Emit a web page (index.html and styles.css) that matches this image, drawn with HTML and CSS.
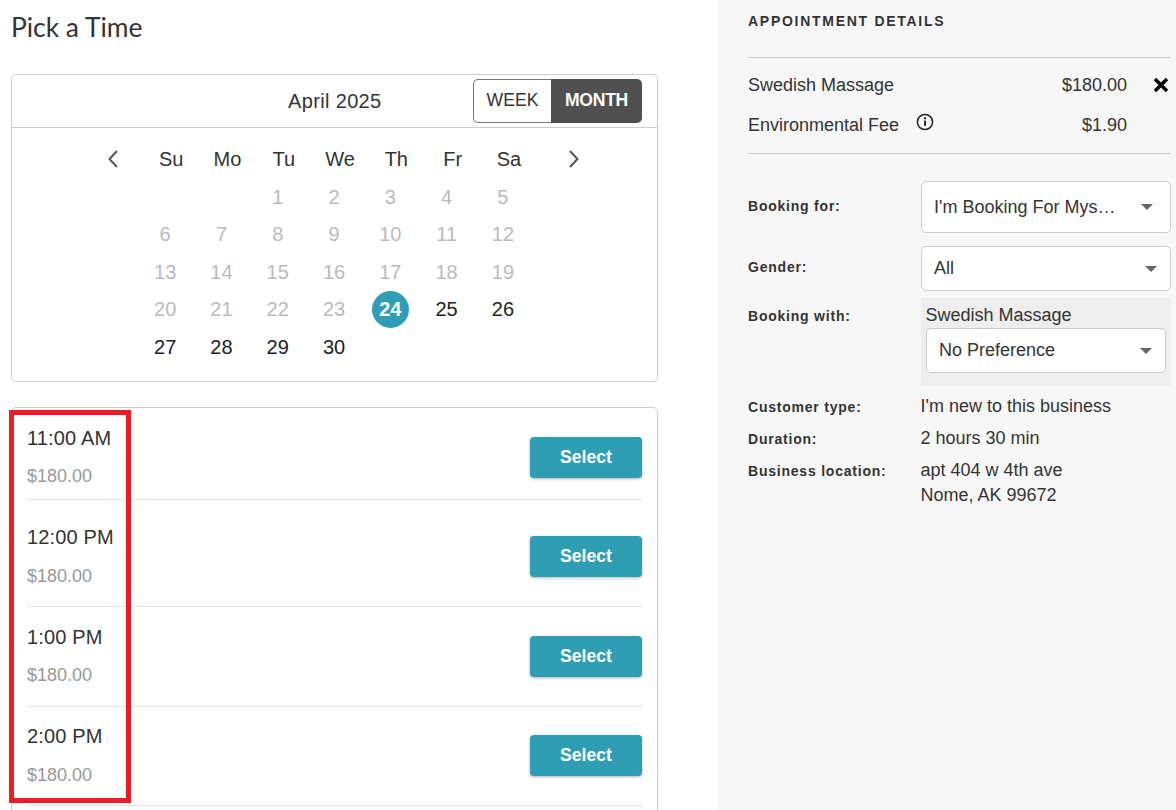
FILE: index.html
```html
<!DOCTYPE html>
<html lang="en">
<head>
<meta charset="utf-8">
<title>Pick a Time</title>
<link rel="stylesheet" href="styles.css">
</head>
<body>
<div class="page">
  <main class="left">
    <h1 class="title">Pick a Time</h1>
    <section class="calendar">
      <div class="cal-top">
        <div class="cal-month">April 2025</div>
        <div class="toggle">
          <span class="toggle-week">WEEK</span>
          <span class="toggle-month">MONTH</span>
        </div>
      </div>
      <div class="cal-head">
        <svg class="chev" viewBox="0 0 16 20" width="16" height="20"><path d="M12 2 L4.5 10 L12 18" fill="none" stroke="#555" stroke-width="2"/></svg>
        <span class="dow">Su</span><span class="dow">Mo</span><span class="dow">Tu</span><span class="dow">We</span><span class="dow">Th</span><span class="dow">Fr</span><span class="dow">Sa</span>
        <svg class="chev chev-next" viewBox="0 0 16 20" width="16" height="20"><path d="M4 2 L11.5 10 L4 18" fill="none" stroke="#555" stroke-width="2"/></svg>
      </div>
      <div class="days">
        <span></span><span></span>
        <span class="off">1</span><span class="off">2</span><span class="off">3</span><span class="off">4</span><span class="off">5</span>
        <span class="off">6</span><span class="off">7</span><span class="off">8</span><span class="off">9</span><span class="off">10</span><span class="off">11</span><span class="off">12</span>
        <span class="off">13</span><span class="off">14</span><span class="off">15</span><span class="off">16</span><span class="off">17</span><span class="off">18</span><span class="off">19</span>
        <span class="off">20</span><span class="off">21</span><span class="off">22</span><span class="off">23</span><span class="today"><b>24</b></span><span>25</span><span>26</span>
        <span>27</span><span>28</span><span>29</span><span>30</span>
      </div>
    </section>
    <section class="slots">
      <div class="slot slot-a"><div><div class="time">11:00 AM</div><div class="price">$180.00</div></div><button class="select">Select</button></div>
      <div class="slot slot-b"><div><div class="time">12:00 PM</div><div class="price">$180.00</div></div><button class="select">Select</button></div>
      <div class="slot"><div><div class="time">1:00 PM</div><div class="price">$180.00</div></div><button class="select">Select</button></div>
      <div class="slot slot-d"><div><div class="time">2:00 PM</div><div class="price">$180.00</div></div><button class="select">Select</button></div>
      <div class="highlight"></div>
    </section>
  </main>
  <aside class="right">
    <h2 class="details-title">APPOINTMENT DETAILS</h2>
    <div class="charges">
      <div class="charge"><span class="charge-name">Swedish Massage</span><span class="charge-price">$180.00</span>
        <svg class="close" viewBox="0 0 16 16" width="16" height="16"><path d="M2 2 L14 14 M14 2 L2 14" stroke="#000" stroke-width="3.4" fill="none"/></svg>
      </div>
      <div class="charge"><span class="charge-name">Environmental Fee
        <svg class="info" viewBox="0 0 18 18" width="18" height="18"><circle cx="9" cy="9" r="7.6" fill="none" stroke="#222" stroke-width="1.5"/><rect x="8.1" y="7.6" width="1.9" height="5.2" fill="#222"/><rect x="8.1" y="4.4" width="1.9" height="1.9" fill="#222"/></svg></span><span class="charge-price">$1.90</span>
      </div>
    </div>
    <div class="form">
      <div class="label label-for">Booking for:</div>
      <div class="dropdown dropdown-tall"><span class="dd-text">I'm Booking For Mys…</span><i class="caret caret-wide"></i></div>
      <div class="label label-gender">Gender:</div>
      <div class="dropdown dropdown-gender"><span class="dd-text">All</span><i class="caret"></i></div>
      <div class="label label-with">Booking with:</div>
      <div class="with-box">
        <div class="with-name">Swedish Massage</div>
        <div class="dropdown"><span class="dd-text">No Preference</span><i class="caret"></i></div>
      </div>
      <div class="label label-info">Customer type:</div><div class="value">I'm new to this business</div>
      <div class="label label-info">Duration:</div><div class="value">2 hours 30 min</div>
      <div class="label label-info">Business location:</div><div class="value value-address">apt 404 w 4th ave<br>Nome, AK 99672</div>
    </div>
  </aside>
</div>
</body>
</html>
```
FILE: styles.css
```css
* { box-sizing: border-box; }
html, body { margin: 0; height: 810px; overflow: hidden; }
body { font-family: "Liberation Sans", Arial, sans-serif; color: #333; background: #fff; }
.page { display: flex; height: 810px; overflow: hidden; }
.left { width: 718px; padding: 0 60px 0 11px; flex: none; }
.right { flex: 1; background: #f7f7f7; padding: 0 5px 0 30px; }

.title { margin: 0; padding-top: 12px; height: 74px; font: 400 26.4px/30px Lato, sans-serif; color: #333; }

.calendar { border: 1px solid #ccc; border-radius: 5px; height: 308px; }
.cal-top { height: 53px; border-bottom: 1px solid #ccc; display: flex; align-items: center; padding: 0 15px 0 276px; justify-content: space-between; }
.cal-month { font-size: 20px; letter-spacing: .35px; }
.toggle { display: flex; width: 169px; height: 44px; margin-top: -1px; font-size: 17.6px; }
.toggle span { display: flex; align-items: center; justify-content: center; }
.toggle-week { width: 78px; border: 1px solid #777; border-right: 0; border-radius: 5px 0 0 5px; background: #fff; }
.toggle-month { flex: 1; background: #505050; color: #fff; font-weight: 700; letter-spacing: -.3px; border-radius: 0 5px 5px 0; }

.cal-head { display: flex; align-items: center; height: 20px; margin-top: 21px; padding-left: 93px; font-size: 20px; }
.chev { flex: none; margin-right: 22px; }
.chev-next { margin: 0 0 0 29px; }
.dow { width: 56.3px; text-align: center; flex: none; }
.days { display: grid; grid-template-columns: repeat(7, 56.3px); grid-auto-rows: 37.5px; margin: 9.5px 0 0 125px; font-size: 20px; color: #222; }
.days span { display: flex; align-items: center; justify-content: center; }
.days .off { color: #bbb; }
.today b { width: 37px; height: 37px; border-radius: 50%; background: #2f9eb5; color: #fff; display: flex; align-items: center; justify-content: center; }

.slots { position: relative; margin-top: 25px; border: 1px solid #ccc; border-radius: 5px; padding: 0 15px; height: 500px; }
.slot { display: flex; justify-content: space-between; align-items: flex-start; height: 100px; padding-top: 19px; border-bottom: 1px solid #e3e3e3; }
.slot-a { height: 92px; }
.slot-b { height: 107px; padding-top: 26px; }
.slot-b .price { margin-top: 17px; }
.slot-d { height: 99px; padding-top: 18px; }
.slot-d .price { margin-top: 17px; }
.time { font-size: 20px; line-height: 23px; letter-spacing: .15px; }
.price { font-size: 18px; line-height: 21px; color: #999; margin-top: 16px; }
.select { width: 112px; height: 41px; margin-top: 10px; border: 0; border-radius: 4px; background: #2f9eb5; color: #fff; font: 700 17.6px "Liberation Sans", Arial, sans-serif; box-shadow: 0 1px 3px rgba(0,0,0,.3); padding: 0; }
.highlight { position: absolute; left: -3px; top: 2px; width: 122px; height: 393px; border: 5px solid #ed1c24; }

.details-title { margin: 0; padding-top: 13px; height: 58px; font-size: 14px; line-height: 16px; font-weight: 700; letter-spacing: 1.72px; border-bottom: 1px solid #ccc; }
.charges { height: 96px; padding-top: 7px; border-bottom: 1px solid #ccc; font-size: 18px; }
.charge { position: relative; display: flex; justify-content: space-between; height: 40px; align-items: center; padding-right: 44px; }
.charge-name { display: inline-flex; align-items: center; gap: 17px; }
.info { margin-top: -6px; }
.close { position: absolute; right: 2px; top: 12px; }

.form { display: grid; grid-template-columns: 173px 250px; align-items: start; padding-top: 27px; }
.label { font-size: 14px; font-weight: 700; letter-spacing: .78px; }
.label-for { padding-top: 17px; }
.label-gender { padding-top: 13px; }
.label-with { padding-top: 10px; }
.label-info { padding-top: 2px; line-height: 30px; }
.dropdown { position: relative; height: 45px; background: #fff; border: 1px solid #ccc; border-radius: 5px; display: flex; align-items: center; padding: 0 42px 0 12px; font-size: 18px; }
.dropdown-tall { height: 52px; margin-bottom: 13px; }
.dropdown-gender { margin-bottom: 7px; }
.caret { position: absolute; right: 13px; top: 50%; margin-top: -3px; border-left: 6px solid transparent; border-right: 6px solid transparent; border-top: 6px solid #666; }
.caret-wide { right: 17px; }
.with-box { background: #eee; height: 88px; padding: 5px; margin-bottom: 4px; font-size: 18px; }
.with-name { height: 25px; line-height: 24px; margin-left: -.5px; }
.value { font-size: 18px; line-height: 32px; margin-left: -.5px; }
.value-address { padding-top: 4px; line-height: 25px; }
```
